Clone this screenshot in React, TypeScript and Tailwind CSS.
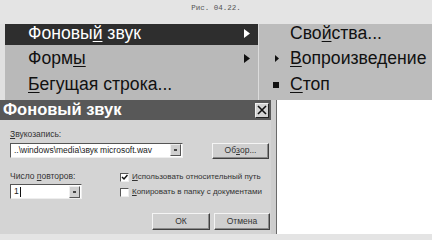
import React from "react";

const Arrow = ({ color }: { color: string }) => (
  <svg width="6" height="9" viewBox="0 0 6 9" className="shrink-0">
    <path d="M0 0 L6 4.5 L0 9 Z" fill={color} />
  </svg>
);

const Btn3D = ({ children, className = "" }: { children: React.ReactNode; className?: string }) => (
  <div
    className={`flex items-center justify-center bg-[#cfcfcf] border border-t-[#f4f4f4] border-l-[#f4f4f4] border-r-[#404040] border-b-[#404040] shadow-[inset_-1px_-1px_0_#8a8a8a] text-[8.5px] text-[#333] ${className}`}
  >
    {children}
  </div>
);

const DropBtn = () => (
  <div className="w-[11px] h-[12px] bg-[#cfcfcf] border border-t-[#eee] border-l-[#eee] border-r-[#555] border-b-[#555] flex items-center justify-center">
    <div className="w-[3px] h-[2px] bg-[#444]" />
  </div>
);

export default function App() {
  return (
    <div
      className="w-[432px] h-[240px] overflow-hidden bg-[#e4e4e4] flex flex-col"
      style={{ fontFamily: '"Liberation Sans", Arial, sans-serif' }}
    >
      {/* caption */}
      <div className="h-[24px] flex justify-center pt-[5px]">
        <span
          className="text-[7.5px] text-[#555] leading-none"
          style={{ fontFamily: '"Liberation Mono", monospace' }}
        >
          Рис. 04.22.
        </span>
      </div>

      {/* menus */}
      <div className="h-[76px] flex">
        <div className="w-[5px] bg-[#e0e0e0]" />
        <div className="w-[253px] bg-[#b9b9b9] flex flex-col text-[17.6px] leading-none">
          <div className="h-[21px] bg-[#2e2e2e] text-white flex items-center pl-[23px] pr-[8px] pb-[2px]">
            <span className="flex-1">
              Фоновы<span className="underline underline-offset-2">й</span> звук
            </span>
            <Arrow color="#ffffff" />
          </div>
          <div className="h-[27px] text-[#111] flex items-center pl-[23px] pr-[8px]">
            <span className="flex-1">
              Форм<span className="underline underline-offset-2">ы</span>
            </span>
            <Arrow color="#111111" />
          </div>
          <div className="h-[28px] text-[#111] flex items-center pl-[23px] pb-[2px]">
            <span>
              <span className="underline underline-offset-2">Б</span>егущая строка...
            </span>
          </div>
        </div>
        <div className="flex-1 bg-[#bcbcbc] border-l border-[#dcdcdc] flex flex-col text-[17.6px] leading-none text-[#111]">
          <div className="h-[21px] flex items-center pl-[31px] pb-[2px]">
            Сво<span className="underline underline-offset-2">й</span>ства...
          </div>
          <div className="h-[27px] flex items-center pl-[16px]">
            <div className="w-[15px]">
              <svg width="4" height="7" viewBox="0 0 4 7">
                <path d="M0 0 L4 3.5 L0 7 Z" fill="#111" />
              </svg>
            </div>
            <span>
              <span className="underline underline-offset-2">В</span>опроизведение
            </span>
          </div>
          <div className="h-[28px] flex items-center pl-[14px] pb-[2px]">
            <div className="w-[17px]">
              <div className="w-[6px] h-[6px] bg-[#111]" />
            </div>
            <span>
              <span className="underline underline-offset-2">С</span>топ
            </span>
          </div>
        </div>
      </div>

      {/* dialog row */}
      <div className="flex-1 flex">
        <div className="w-[271px] flex flex-col">
          <div className="h-[20px] bg-[#585858] flex items-center pl-[3px] pr-[2px]">
            <span className="flex-1 text-white font-bold text-[16.5px] leading-none pb-[1px]">
              Фоновый звук
            </span>
            <div className="w-[14px] h-[15px] bg-[#d4d4d4] border border-t-[#f0f0f0] border-l-[#f0f0f0] border-r-[#222] border-b-[#222] flex items-center justify-center">
              <svg width="10" height="10" viewBox="0 0 10 10">
                <path d="M1 1 L9 9 M9 1 L1 9" stroke="#111" strokeWidth="1.6" />
              </svg>
            </div>
          </div>
          <div className="flex-1 bg-[#d4d4d4] text-[8.5px] text-[#333] leading-none">
            <div className="flex flex-col pl-[10px] pt-[10px]">
              <span>
                <span className="underline">З</span>вукозапись:
              </span>
              <div className="mt-[4px] flex items-start">
                <div className="w-[173px] h-[15px] bg-white border border-t-[#555] border-l-[#555] border-r-[#eee] border-b-[#eee] flex items-center pl-[3px] pr-[1px]">
                  <span className="flex-1 text-[#222]">..\windows\media\звук microsoft.wav</span>
                  <DropBtn />
                </div>
                <Btn3D className="ml-[29px] w-[57px] h-[16px]">
                  Об<span className="underline">з</span>ор...
                </Btn3D>
              </div>
              <div className="mt-[13px] flex">
                <div className="flex flex-col w-[110px]">
                  <span>
                    Число <span className="underline">п</span>овторов:
                  </span>
                  <div className="mt-[4px] w-[72px] h-[15px] bg-white border border-t-[#555] border-l-[#555] border-r-[#eee] border-b-[#eee] flex items-center pl-[3px] pr-[1px]">
                    <span className="flex-1 text-[#222] flex items-center">
                      1<span className="w-[1px] h-[10px] bg-[#111] ml-[1px]" />
                    </span>
                    <DropBtn />
                  </div>
                </div>
                <div className="flex flex-col gap-[6px] pt-[1px] text-[8px]">
                  <div className="flex items-center gap-[3px]">
                    <div className="w-[9px] h-[9px] bg-white border border-t-[#555] border-l-[#555] border-r-[#eee] border-b-[#eee] flex items-center justify-center">
                      <svg width="7" height="7" viewBox="0 0 7 7">
                        <path d="M1 3 L3 5 L6.5 1" stroke="#111" strokeWidth="1.5" fill="none" />
                      </svg>
                    </div>
                    <span>
                      <span className="underline">И</span>спользовать относительный путь
                    </span>
                  </div>
                  <div className="flex items-center gap-[3px]">
                    <div className="w-[9px] h-[9px] bg-white border border-t-[#555] border-l-[#555] border-r-[#eee] border-b-[#eee]" />
                    <span>
                      <span className="underline">К</span>опировать в папку с документами
                    </span>
                  </div>
                </div>
              </div>
              <div className="mt-[14px] flex pl-[142px] gap-[4px]">
                <Btn3D className="w-[58px] h-[17px]">ОК</Btn3D>
                <Btn3D className="w-[56px] h-[17px]">Отмена</Btn3D>
              </div>
            </div>
          </div>
        </div>
        <div className="w-[6px] bg-[#cdcdcd] border-r border-[#6a6a6a]" />
        <div className="flex-1 bg-white" />
      </div>
      <div className="h-[6px] bg-[#e4e4e4]" />
    </div>
  );
}
